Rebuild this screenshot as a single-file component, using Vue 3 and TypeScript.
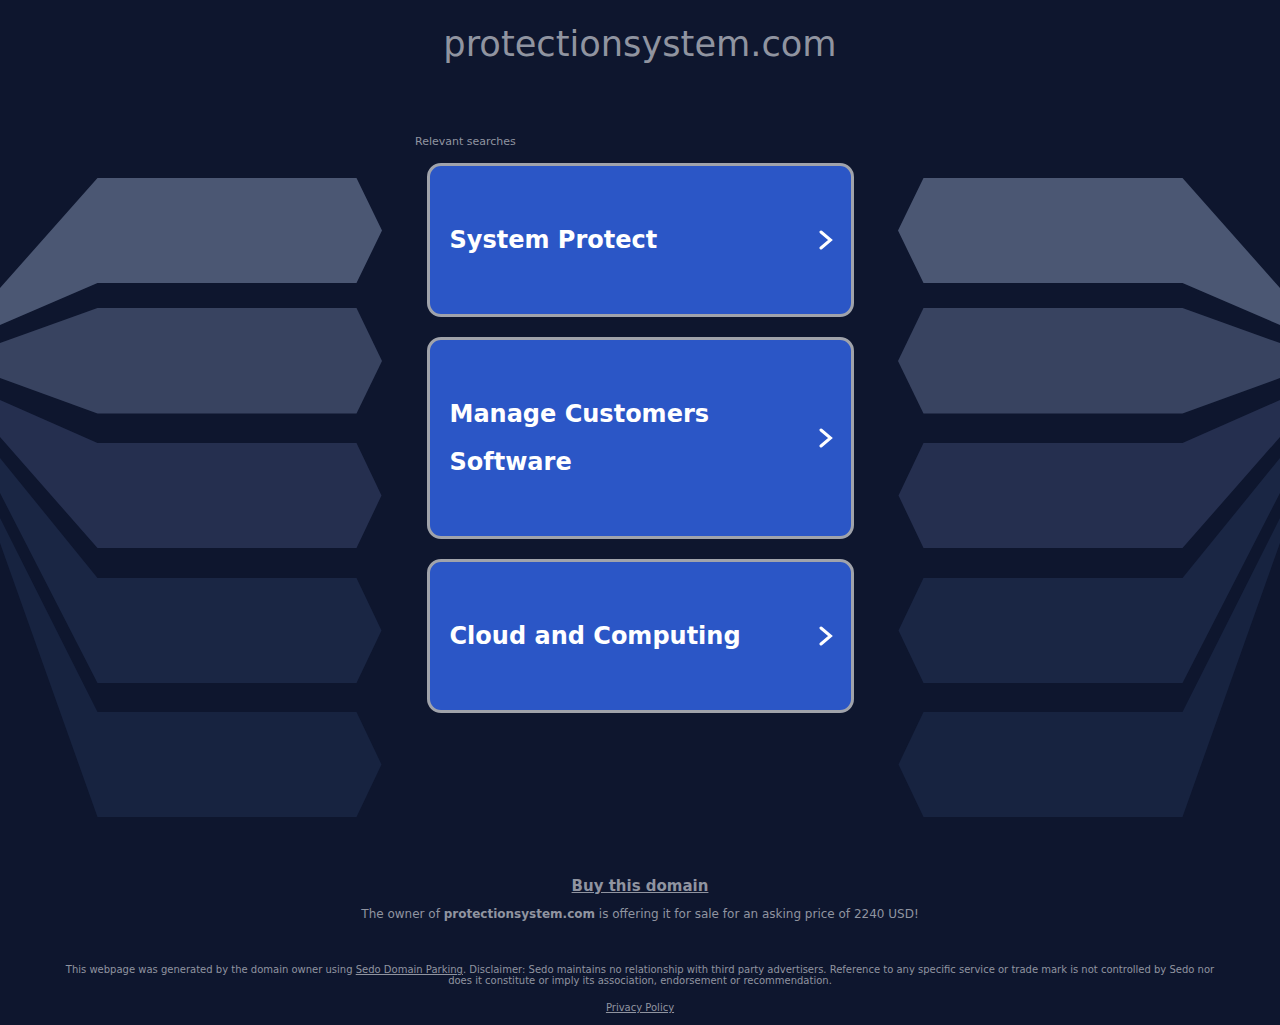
<template>
  <div class="page">
    <svg class="backdrop" width="1280" height="1025" viewBox="0 0 1280 1025" aria-hidden="true">
      <g v-for="side in sides" :key="side" :transform="side === 'right' ? 'translate(1280 0) scale(-1 1)' : undefined">
        <polygon v-for="band in bands" :key="band.fill" :points="band.points" :fill="band.fill" />
      </g>
    </svg>

    <div class="content">
      <h1 class="domain">protectionsystem.com</h1>

      <div class="searches">
        <p class="searches-title">Relevant searches</p>
        <a v-for="link in links" :key="link" class="search-link" href="#">
          <span class="search-label">{{ link }}</span>
          <svg class="chevron" width="14" height="20" viewBox="0 0 14 20">
            <path d="M2 2 L11.5 10 L2 18" fill="none" stroke="#fff" stroke-width="3" stroke-linecap="round" stroke-linejoin="miter" />
          </svg>
        </a>
      </div>

      <div class="offer">
        <a class="buy" href="#">Buy this domain</a>
        <p class="price">The owner of <strong>protectionsystem.com</strong> is offering it for sale for an asking price of 2240 USD!</p>
      </div>

      <footer class="legal">
        <p class="disclaimer">This webpage was generated by the domain owner using <a href="#">Sedo Domain Parking</a>. Disclaimer: Sedo maintains no relationship with third party advertisers. Reference to any specific service or trade mark is not controlled by Sedo nor does it constitute or imply its association, endorsement or recommendation.</p>
        <a class="privacy" href="#">Privacy Policy</a>
      </footer>
    </div>
  </div>
</template>

<script setup lang="ts">
const sides = ['left', 'right']

const links = ['System Protect', 'Manage Customers Software', 'Cloud and Computing']

const bands = [
  { fill: '#4b5773', points: '0,288 97.5,178 356.5,178 382,230.5 356.5,283 97.5,283 0,325' },
  { fill: '#384360', points: '0,343 97.5,308 356.5,308 382,361 356.5,413.5 97.5,413.5 0,378' },
  { fill: '#252f4f', points: '0,400 97.5,443 356.5,443 381.5,495.5 356.5,548 97.5,548 0,437' },
  { fill: '#1a2644', points: '0,458 97.5,578 356.5,578 381.5,630.5 356.5,683 97.5,683 0,493' },
  { fill: '#172340', points: '0,518 97.5,712 356.5,712 381.5,764.5 356.5,817 97.5,817 0,543' },
]
</script>

<style>
html,
body {
  margin: 0;
  background: #0e162e;
}
</style>

<style scoped>
.page {
  position: relative;
  height: 1025px;
  overflow: hidden;
  background: #0e162e;
  font-family: "DejaVu Sans", sans-serif;
  color: #9094a0;
}

.backdrop {
  position: absolute;
  top: 0;
  left: 0;
}

.content {
  position: relative;
  display: flex;
  flex-direction: column;
  align-items: center;
}

.domain {
  margin: 0;
  padding-top: 23px;
  height: 42px;
  font-size: 35.2px;
  line-height: 42px;
  font-weight: 400;
  color: #9094a0;
}

.searches {
  width: 450px;
  margin-top: 70px;
  display: flex;
  flex-direction: column;
  align-items: center;
}

.searches-title {
  align-self: flex-start;
  margin: 0 0 15px;
  font-size: 11px;
  line-height: 13px;
  color: #9094a0;
}

.search-link {
  box-sizing: border-box;
  width: 427px;
  margin-bottom: 20px;
  padding: 0 18px 0 20px;
  display: flex;
  align-items: center;
  justify-content: space-between;
  background: #2b56c6;
  border: 3px solid #a0a3ab;
  border-radius: 14px;
  color: #fff;
  text-decoration: none;
}

.search-label {
  width: 340px;
  padding: 50px 0;
  font-size: 24px;
  line-height: 48px;
  font-weight: 700;
}

.chevron {
  flex-shrink: 0;
}

.offer {
  margin-top: 143px;
  display: flex;
  flex-direction: column;
  align-items: center;
}

.buy {
  font-size: 15px;
  line-height: 20px;
  font-weight: 700;
  color: #9094a0;
}

.price {
  margin: 10px 0 0;
  font-size: 12px;
  line-height: 16px;
}

.legal {
  width: 1160px;
  margin-top: 42px;
  display: flex;
  flex-direction: column;
  align-items: center;
  font-size: 10px;
  line-height: 11px;
  text-align: center;
}

.disclaimer {
  margin: 0;
}

.legal a {
  color: #9094a0;
}

.privacy {
  margin-top: 16px;
}
</style>
